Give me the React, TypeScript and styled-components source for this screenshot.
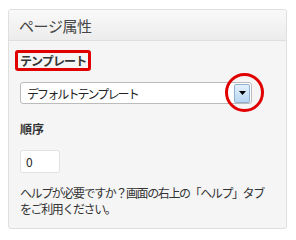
import styled, { createGlobalStyle } from "styled-components";

const GlobalStyle = createGlobalStyle`
  body {
    margin: 0;
    background: #fff;
    font-family: "Noto Sans CJK JP", "Noto Sans", sans-serif;
    color: #333;
  }
`;

const Panel = styled.div`
  margin: 9px 0 0 8px;
  width: 279px;
  height: 220px;
  border: 1px solid #dfdfdf;
  border-radius: 3px;
  background: #f5f5f5;
  box-sizing: border-box;
  overflow: hidden;
`;

const Header = styled.div`
  height: 31px;
  display: flex;
  align-items: center;
  padding-left: 10px;
  background: linear-gradient(#f9f9f9, #ececec);
  border-bottom: 1px solid #dfdfdf;
  box-sizing: border-box;
  font-size: 15px;
  letter-spacing: -0.4px;
  color: #464646;
`;

const Body = styled.div`
  padding: 9px 11px 0 11px;
  display: flex;
  flex-direction: column;
  align-items: flex-start;
`;

const MarkedLabel = styled.div`
  margin-left: -5px;
  height: 21px;
  box-sizing: border-box;
  padding: 0 2px;
  border: 3px solid #e10000;
  border-radius: 3px;
  font-size: 12px;
  font-weight: bold;
  letter-spacing: -0.9px;
  line-height: 15px;
  color: #333;
`;

const SelectWrap = styled.div`
  position: relative;
  margin-top: 11px;
  width: 232px;
  height: 22px;
  box-sizing: border-box;
  border: 1px solid #bbb;
  border-radius: 3px;
  background: #fff;
  display: flex;
  align-items: center;
  justify-content: space-between;
  padding: 0 1px 0 6px;
`;

const SelectText = styled.span`
  font-size: 12px;
  letter-spacing: -1.9px;
  color: #222;
`;

const ArrowButton = styled.div`
  width: 16px;
  height: 19px;
  box-sizing: border-box;
  border: 1px solid #8fb0cf;
  border-radius: 2px;
  background: linear-gradient(#e4f1fc, #b7d6f2);
  display: flex;
  align-items: center;
  justify-content: center;
`;

const Circle = styled.div`
  position: absolute;
  right: -13px;
  top: -10px;
  width: 39px;
  height: 39px;
  box-sizing: border-box;
  border: 3px solid #e10000;
  border-radius: 50%;
`;

const FieldLabel = styled.div`
  margin-top: 17px;
  font-size: 12px;
  font-weight: bold;
  line-height: 16px;
  color: #333;
`;

const NumberBox = styled.div`
  margin-top: 13px;
  width: 40px;
  height: 23px;
  box-sizing: border-box;
  border: 1px solid #e2e2e2;
  border-radius: 3px;
  background: #fff;
  padding-left: 5px;
  font-size: 12px;
  line-height: 21px;
  color: #222;
`;

const Help = styled.p`
  margin: 12px 0 0 0;
  font-size: 12px;
  letter-spacing: -1.4px;
  line-height: 16px;
  color: #333;
`;

export default function App() {
  return (
    <>
      <GlobalStyle />
      <Panel>
        <Header>ページ属性</Header>
        <Body>
          <MarkedLabel>テンプレート</MarkedLabel>
          <SelectWrap>
            <SelectText>デフォルトテンプレート</SelectText>
            <ArrowButton>
              <svg width="7" height="4" viewBox="0 0 7 4">
                <path d="M0 0h7L3.5 4z" fill="#000" />
              </svg>
            </ArrowButton>
            <Circle />
          </SelectWrap>
          <FieldLabel>順序</FieldLabel>
          <NumberBox>0</NumberBox>
          <Help>
            ヘルプが必要ですか？画面の右上の「ヘルプ」タブ
            <br />
            をご利用ください。
          </Help>
        </Body>
      </Panel>
    </>
  );
}
